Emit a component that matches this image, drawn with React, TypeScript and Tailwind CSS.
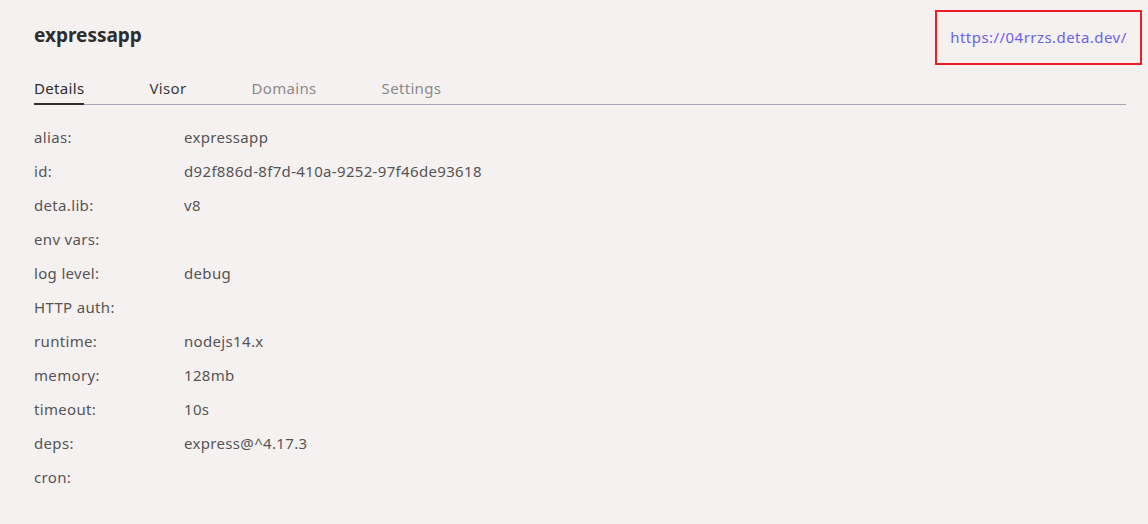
const rows: [string, string][] = [
  ['alias:', 'expressapp'],
  ['id:', 'd92f886d-8f7d-410a-9252-97f46de93618'],
  ['deta.lib:', 'v8'],
  ['env vars:', ''],
  ['log level:', 'debug'],
  ['HTTP auth:', ''],
  ['runtime:', 'nodejs14.x'],
  ['memory:', '128mb'],
  ['timeout:', '10s'],
  ['deps:', 'express@^4.17.3'],
  ['cron:', ''],
];

const tabs = ['Details', 'Visor', 'Domains', 'Settings'];

const App = () => {
  return (
    <div className="min-h-[524px] w-full bg-[#f5f1f1] pl-[34px] pr-[22px] font-['Noto_Sans',sans-serif] text-[15px] tracking-[0.33px] text-[#555]">
      <div className="flex h-[70px] items-center justify-between">
        <span className="text-[19px] font-bold tracking-normal text-[#2d2d2d]">expressapp</span>
        <div className="-mr-[16px] mt-[4px] flex h-[55px] w-[207px] items-center justify-center border-2 border-[#ee1c25]">
          <a className="tracking-[0.45px] text-[#6a63e8]" href="#">https://04rrzs.deta.dev/</a>
        </div>
      </div>
      <div className="flex gap-[65px] border-b border-[#a6a6b6] leading-[22px]">
        {tabs.map((t, i) => (
          <div
            key={t}
            className={
              i === 0
                ? '-mb-[1px] border-b-2 border-[#2d2d2d] pt-[7px] pb-[4px] text-[#2d2d2d]'
                : i === 1
                ? 'pt-[7px] pb-[5px] text-[#3a3a3a]'
                : 'pt-[7px] pb-[5px] text-[#8a8a8a]'
            }
          >
            {t}
          </div>
        ))}
      </div>
      <div className="flex flex-col pt-[15px]">
        {rows.map(([k, v]) => (
          <div key={k} className="flex h-[34px] items-center leading-[34px]">
            <span className="w-[150px]">{k}</span>
            <span>{v}</span>
          </div>
        ))}
      </div>
    </div>
  );
};

export default App;
